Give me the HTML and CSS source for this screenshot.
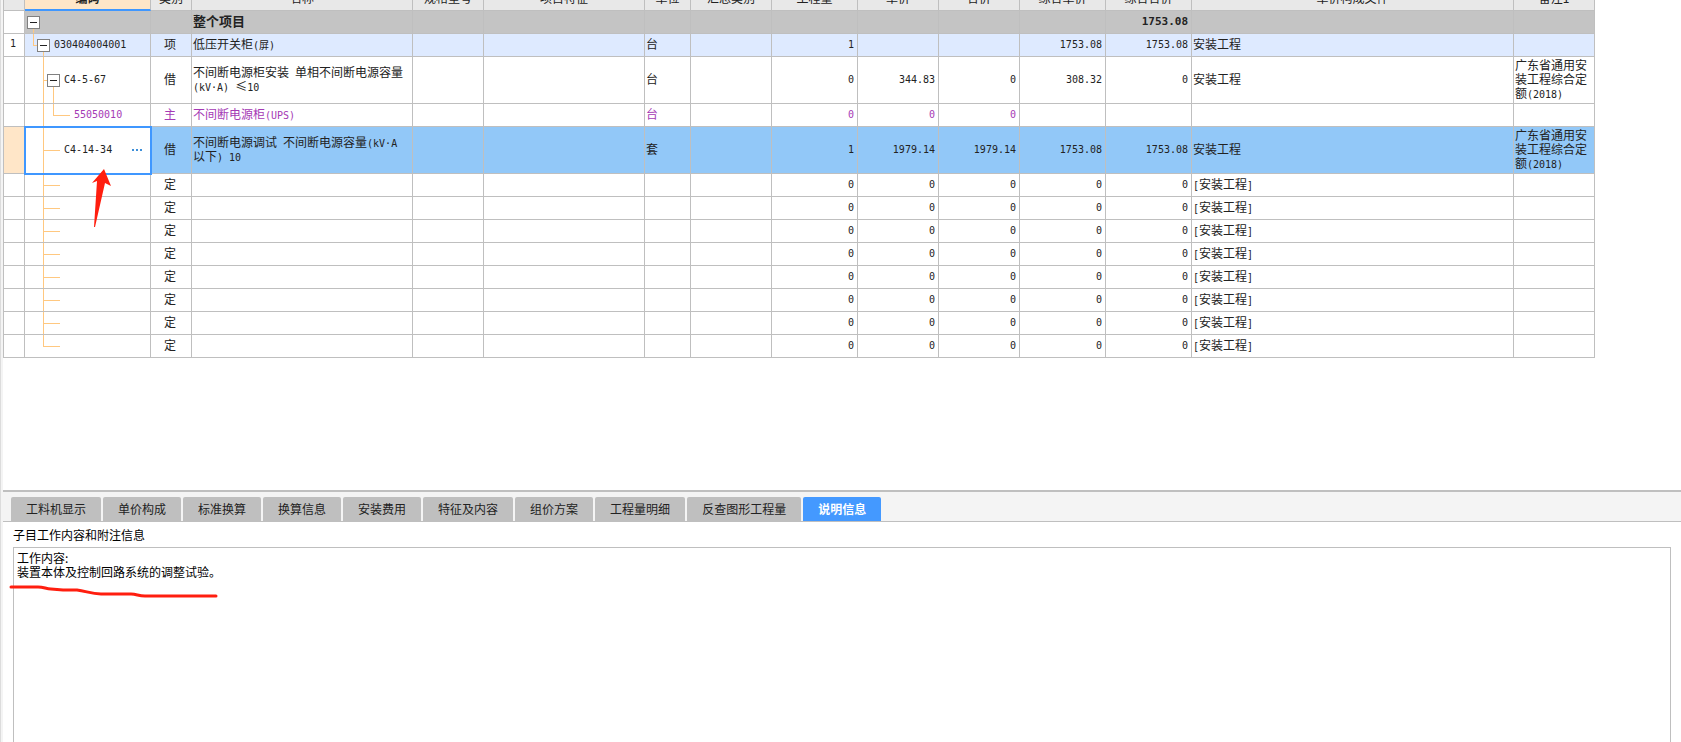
FILE: index.html
```html
<!DOCTYPE html>
<html lang="zh-CN">
<head>
<meta charset="utf-8">
<title>工程计价</title>
<link rel="stylesheet" href="styles.css">
</head>
<body>
<main class="workspace">
  <section class="sheet">
    <table class="grid">
      <colgroup>
        <col class="w-num"><col class="w-code"><col class="w-kind"><col class="w-name"><col class="w-spec"><col class="w-feature"><col class="w-unit"><col class="w-small"><col class="w-wide"><col class="w-small"><col class="w-small"><col class="w-wide"><col class="w-wide"><col class="w-file"><col class="w-small">
      </colgroup>
      <thead>
        <tr><th></th><th class="current">编码</th><th>类别</th><th>名称</th><th>规格型号</th><th>项目特征</th><th>单位</th><th>汇总类别</th><th>工程量</th><th>单价</th><th>合价</th><th>综合单价</th><th>综合合价</th><th>单价构成文件</th><th>备注1</th></tr>
      </thead>
      <tbody>
        <tr class="total">
          <td class="num"></td>
          <td class="code root"><div class="node level-0"><button class="toggle" aria-label="折叠"></button></div></td>
          <td></td><td class="title">整个项目</td><td></td><td></td><td></td><td></td><td></td><td></td><td></td><td></td><td class="price">1753.08</td><td></td><td></td>
        </tr>
        <tr class="item">
          <td class="num">1</td>
          <td class="code branch"><div class="node level-1"><button class="toggle" aria-label="折叠"></button><span>030404004001</span></div></td>
          <td class="kind">项</td><td>低压开关柜<span class="mono">(屏)</span></td><td></td><td></td><td>台</td><td></td><td class="price">1</td><td class="price"></td><td class="price"></td><td class="price">1753.08</td><td class="price">1753.08</td><td>安装工程</td><td></td>
        </tr>
        <tr class="tall">
          <td class="num"></td>
          <td class="code parent"><div class="node level-2"><button class="toggle" aria-label="折叠"></button><span>C4-5-67</span></div></td>
          <td class="kind">借</td><td>不间断电源柜安装<span class="mono"> </span>单相不间断电源容量<br><span class="mono">(kV·A) </span>≤<span class="mono">10</span></td><td></td><td></td><td>台</td><td></td><td class="price">0</td><td class="price">344.83</td><td class="price">0</td><td class="price">308.32</td><td class="price">0</td><td>安装工程</td><td>广东省通用安装工程综合定额<span class="mono">(2018)</span></td>
        </tr>
        <tr class="material">
          <td class="num"></td>
          <td class="code child"><div class="node level-3"><span>55050010</span></div></td>
          <td class="kind">主</td><td>不间断电源柜<span class="mono">(UPS)</span></td><td></td><td></td><td>台</td><td></td><td class="price">0</td><td class="price">0</td><td class="price">0</td><td></td><td></td><td></td><td></td>
        </tr>
        <tr class="tall selected">
          <td class="num"></td>
          <td class="code leaf editing"><div class="node level-4"><span>C4-14-34</span><button class="more" aria-label="更多"><svg width="10" height="2" viewBox="0 0 10 2"><path d="M0 0h2v2H0zM4 0h2v2H4zM8 0h2v2H8z"/></svg></button></div></td>
          <td class="kind">借</td><td>不间断电源调试<span class="mono"> </span>不间断电源容量<span class="mono">(kV·A</span><br>以下<span class="mono">) 10</span></td><td></td><td></td><td>套</td><td></td><td class="price">1</td><td class="price">1979.14</td><td class="price">1979.14</td><td class="price">1753.08</td><td class="price">1753.08</td><td>安装工程</td><td>广东省通用安装工程综合定额<span class="mono">(2018)</span></td>
        </tr>
        <tr><td class="num"></td><td class="code leaf"></td><td class="kind">定</td><td></td><td></td><td></td><td></td><td></td><td class="price">0</td><td class="price">0</td><td class="price">0</td><td class="price">0</td><td class="price">0</td><td><span class="mono">[</span>安装工程<span class="mono">]</span></td><td></td></tr>
        <tr><td class="num"></td><td class="code leaf"></td><td class="kind">定</td><td></td><td></td><td></td><td></td><td></td><td class="price">0</td><td class="price">0</td><td class="price">0</td><td class="price">0</td><td class="price">0</td><td><span class="mono">[</span>安装工程<span class="mono">]</span></td><td></td></tr>
        <tr><td class="num"></td><td class="code leaf"></td><td class="kind">定</td><td></td><td></td><td></td><td></td><td></td><td class="price">0</td><td class="price">0</td><td class="price">0</td><td class="price">0</td><td class="price">0</td><td><span class="mono">[</span>安装工程<span class="mono">]</span></td><td></td></tr>
        <tr><td class="num"></td><td class="code leaf"></td><td class="kind">定</td><td></td><td></td><td></td><td></td><td></td><td class="price">0</td><td class="price">0</td><td class="price">0</td><td class="price">0</td><td class="price">0</td><td><span class="mono">[</span>安装工程<span class="mono">]</span></td><td></td></tr>
        <tr><td class="num"></td><td class="code leaf"></td><td class="kind">定</td><td></td><td></td><td></td><td></td><td></td><td class="price">0</td><td class="price">0</td><td class="price">0</td><td class="price">0</td><td class="price">0</td><td><span class="mono">[</span>安装工程<span class="mono">]</span></td><td></td></tr>
        <tr><td class="num"></td><td class="code leaf"></td><td class="kind">定</td><td></td><td></td><td></td><td></td><td></td><td class="price">0</td><td class="price">0</td><td class="price">0</td><td class="price">0</td><td class="price">0</td><td><span class="mono">[</span>安装工程<span class="mono">]</span></td><td></td></tr>
        <tr><td class="num"></td><td class="code leaf"></td><td class="kind">定</td><td></td><td></td><td></td><td></td><td></td><td class="price">0</td><td class="price">0</td><td class="price">0</td><td class="price">0</td><td class="price">0</td><td><span class="mono">[</span>安装工程<span class="mono">]</span></td><td></td></tr>
        <tr><td class="num"></td><td class="code last"></td><td class="kind">定</td><td></td><td></td><td></td><td></td><td></td><td class="price">0</td><td class="price">0</td><td class="price">0</td><td class="price">0</td><td class="price">0</td><td><span class="mono">[</span>安装工程<span class="mono">]</span></td><td></td></tr>
      </tbody>
    </table>
    <svg class="arrow" width="20" height="60" viewBox="0 0 20 60"><path d="M13 1 1 15l5-2-3 46h1l10-44 6 3z"/></svg>
  </section>
  <section class="details">
    <nav class="tabs">
      <button class="tab">工料机显示</button>
      <button class="tab">单价构成</button>
      <button class="tab">标准换算</button>
      <button class="tab">换算信息</button>
      <button class="tab">安装费用</button>
      <button class="tab">特征及内容</button>
      <button class="tab">组价方案</button>
      <button class="tab">工程量明细</button>
      <button class="tab">反查图形工程量</button>
      <button class="tab active">说明信息</button>
    </nav>
    <div class="notes">
      <label class="notes-label" for="notes">子目工作内容和附注信息</label>
      <textarea class="notes-text" id="notes" spellcheck="false">工作内容:
装置本体及控制回路系统的调整试验。</textarea>
      <svg class="underline" width="210" height="14" viewBox="0 0 210 14"><path d="M2 3h27c6 0 8 2 13 2l12 1h14c9 1 14 4 24 4h30c6 0 7 2 14 2h71"/></svg>
    </div>
  </section>
</main>
</body>
</html>
```
FILE: styles.css
```css
* {
  box-sizing: border-box;
}

body {
  margin: 0;
  background: #fff;
  color: #222;
  font: 12px/14px "Noto Sans CJK SC", sans-serif;
}

button {
  padding: 0;
  border: 0;
  background: none;
  font: inherit;
  color: inherit;
}

.workspace {
  display: grid;
  grid-template-rows: 1fr auto;
  height: 100vh;
  padding-left: 3px;
  background: linear-gradient(to right, #dcdcdc 1px, #f4f4f4 1px);
  overflow: hidden;
}

.sheet {
  position: relative;
  background: #fff;
  overflow: hidden;
}

/* The header is scrolled partly out of view. */
.grid {
  margin-top: -14px;
  table-layout: fixed;
  width: 1592px;
  border-collapse: separate;
  border-spacing: 0;
  border-left: 1px solid #bfbfbf;
}

.w-num { width: 21px; }
.w-code { width: 126px; }
.w-kind { width: 41px; }
.w-name { width: 221px; }
.w-spec { width: 71px; }
.w-feature { width: 161px; }
.w-unit { width: 46px; }
.w-small { width: 81px; }
.w-wide { width: 86px; }
.w-file { width: 322px; }

th,
td {
  height: 23px;
  padding: 0 3px 2px 1px;
  border: solid #bfbfbf;
  border-width: 0 1px 1px 0;
  text-align: left;
  white-space: normal;
}

th {
  height: 25px;
  padding: 0;
  background: #e8e8e8;
  font-weight: normal;
  text-align: center;
}

th.current {
  border-bottom: 2px solid #3f97ff;
  background: #ffe6c8;
  font-weight: bold;
}

.tall td {
  height: 47px;
}

td.num,
td.kind {
  text-align: center;
}

.num,
.price,
.code,
.mono {
  font-family: "DejaVu Sans Mono", "Noto Sans CJK SC", monospace;
  font-size: 10px;
}

.mono {
  line-height: 10px;
  white-space: pre;
}

td.price {
  padding-bottom: 0;
  text-align: right;
}

.total td {
  background-color: #c4c4c4;
}

.total td.num,
.item td.num {
  background: #fff;
}

.total .title {
  font-size: 13px;
  font-weight: bold;
}

.total .price {
  font-size: 11px;
  font-weight: bold;
}

.item td {
  background-color: #deeaff;
}

.material td {
  color: #a53ab5;
}

.selected td {
  background-color: #92c8f8;
}

.selected td.num {
  background: #ffe6c8;
}

/* Tree connectors are one-pixel strips behind the node. */
.code {
  --line: linear-gradient(#ffc880, #ffc880);
  background-repeat: no-repeat;
}

td.code {
  padding: 0;
}

.root {
  background-image: var(--line);
  background-position: 8px 100%;
  background-size: 1px 50%;
}

.branch {
  background-image: var(--line), var(--line), var(--line);
  background-position: 8px 0, 8px 50%, 18px 100%;
  background-size: 1px 50%, 6px 1px, 1px 50%;
}

.parent {
  background-image: var(--line), var(--line), var(--line);
  background-position: 18px 0, 18px 50%, 28px 100%;
  background-size: 1px 100%, 6px 1px, 1px 50%;
}

.child {
  background-image: var(--line), var(--line), var(--line);
  background-position: 18px 0, 28px 0, 28px 50%;
  background-size: 1px 100%, 1px 50%, 17px 1px;
}

.leaf {
  background-image: var(--line), var(--line);
  background-position: 18px 0, 18px 50%;
  background-size: 1px 100%, 17px 1px;
}

.last {
  background-image: var(--line), var(--line);
  background-position: 18px 0, 18px 50%;
  background-size: 1px 50%, 17px 1px;
}

.selected td.editing {
  background-color: #fff;
  outline: 2px solid #3f97ff;
  outline-offset: -1px;
}

.node {
  display: flex;
  align-items: center;
  gap: 4px;
}

.level-0 { padding-left: 2px; }
.level-1 { padding-left: 12px; }
.level-2 { padding-left: 22px; }
.level-3 { padding-left: 49px; }

.level-4 {
  justify-content: space-between;
  padding: 0 8px 0 39px;
}

.toggle {
  width: 13px;
  height: 13px;
  border: 1px solid #808080;
  background: linear-gradient(#222, #222) center / 7px 1px no-repeat #fff;
}

.more {
  display: flex;
  padding: 4px 0;
}

.more svg {
  fill: #3d8fd9;
}

.arrow {
  position: absolute;
  left: 88px;
  top: 168px;
  fill: #ff1e0f;
}

.details {
  background: #fff;
}

.tabs {
  display: flex;
  gap: 2px;
  padding: 5px 8px 0;
  border-top: 2px solid #bfbfbf;
  border-bottom: 1px solid #bfbfbf;
  background: #f4f4f4;
}

.tab {
  height: 24px;
  padding: 0 15px;
  border-radius: 2px 2px 0 0;
  background: #bfbfbf;
}

.tab.active {
  background: #4499ff;
  color: #fff;
  font-weight: bold;
}

.notes {
  position: relative;
  padding: 6px 10px 0;
  color: #000;
}

.notes-label {
  display: block;
  margin-bottom: 5px;
}

.notes-text {
  display: block;
  width: 100%;
  height: 195px;
  padding: 3px;
  border: 1px solid #bfbfbf;
  border-bottom: 0;
  outline: 0;
  resize: none;
  background: #fff;
  color: #000;
  font: inherit;
}

.underline {
  position: absolute;
  left: 6px;
  top: 62px;
  fill: none;
  stroke: #ff1e0f;
  stroke-width: 3;
  stroke-linecap: round;
}
```
